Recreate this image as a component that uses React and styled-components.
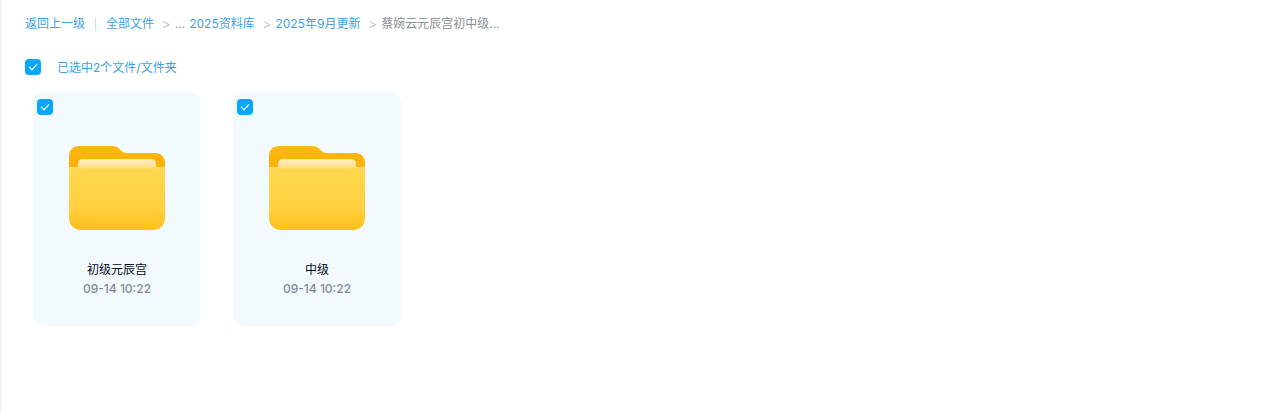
import React from 'react'
import styled, { createGlobalStyle } from 'styled-components'

const GlobalStyle = createGlobalStyle`
  html, body {
    margin: 0;
    padding: 0;
    background: #fff;
  }
  body {
    font-family: Inter, "Noto Sans CJK SC", sans-serif;
  }
`

const Page = styled.div`
  box-sizing: border-box;
  height: 414px;
  padding: 16px 24px 0;
  border-left: 1px solid #f0f0f0;
`

const Crumbs = styled.nav`
  display: flex;
  align-items: center;
  height: 16px;
  font-size: 12px;
  line-height: 16px;
  white-space: nowrap;
`

const CrumbLink = styled.a`
  color: #3d9fe6;
`

const Divider = styled.span`
  width: 1px;
  height: 13px;
  margin: 0 10px;
  background: #cfe0f2;
`

const Sep = styled.span`
  margin: 0 4px 0 7.5px;
  font-size: 14px;
  color: #c3cfdf;
`

const Dots = styled.span`
  margin-right: 4px;
  color: #8a919f;
`

const Current = styled.span`
  color: #8a8f99;
`

const SelectBar = styled.div`
  display: flex;
  align-items: center;
  gap: 16px;
  margin-top: 27px;
  font-size: 12px;
  line-height: 16px;
  color: #3d9fe6;
`

const SelectText = styled.span`
  box-sizing: border-box;
  height: 16px;
  padding-top: 1px;
`

const Check = styled.span`
  display: flex;
  align-items: center;
  justify-content: center;
  width: 16px;
  height: 16px;
  border-radius: 4px;
  background: #06a7ff;
`

const Grid = styled.div`
  display: flex;
  gap: 32px;
  margin: 17px 0 0 8px;
`

const Card = styled.div`
  position: relative;
  display: flex;
  flex-direction: column;
  align-items: center;
  width: 168px;
  height: 234px;
  padding-top: 54px;
  box-sizing: border-box;
  border-radius: 10px;
  background: #f2fafe;
`

const CardCheck = styled.div`
  position: absolute;
  top: 7px;
  left: 4px;
`

const Name = styled.div`
  margin-top: 31px;
  font-size: 12px;
  line-height: 18px;
  color: #03081a;
`

const Time = styled.div`
  margin-top: 1px;
  font-size: 12px;
  font-weight: 500;
  line-height: 18px;
  color: #818999;
`

const Tick = () => (
  <svg width="10" height="10" viewBox="0 0 10 10" fill="none">
    <path d="M1.4 5.2 L4 7.8 L8.6 2.6" stroke="#fff" strokeWidth="1.2" strokeLinecap="round" strokeLinejoin="round" />
  </svg>
)

const FolderIcon = ({ id }) => (
  <svg width="96" height="84" viewBox="0 0 96 84">
    <defs>
      <linearGradient id={`back${id}`} x1="0" y1="0" x2="0" y2="1">
        <stop offset="0" stopColor="#ffb90f" />
        <stop offset="1" stopColor="#ffa800" />
      </linearGradient>
      <linearGradient id={`front${id}`} x1="0" y1="0" x2="0" y2="1">
        <stop offset="0" stopColor="#ffd850" />
        <stop offset="0.65" stopColor="#ffd040" />
        <stop offset="1" stopColor="#ffc01a" />
      </linearGradient>
      <linearGradient id={`paper${id}`} x1="0" y1="0" x2="0" y2="1">
        <stop offset="0" stopColor="#fff0c4" />
        <stop offset="1" stopColor="#ffd97a" />
      </linearGradient>
    </defs>
    <path
      d="M10 0 H44 C47 0 49 1.5 51 3.5 C53 5.5 55 7 58 7 H86 C92 7 96 11 96 17 V40 H0 V10 C0 4 4 0 10 0 Z"
      fill={`url(#back${id})`}
    />
    <path d="M9 18 C9 15 11 13 14 13 H82 C85 13 87 15 87 18 V24 H9 Z" fill={`url(#paper${id})`} />
    <path
      d="M0 21 H96 V72 C96 79 91 84 84 84 H12 C5 84 0 79 0 72 Z"
      fill={`url(#front${id})`}
    />
    <rect x="0" y="21" width="96" height="1.5" fill="#ffe07a" />
  </svg>
)

const files = [
  { id: 'a', name: '初级元辰宫', time: '09-14 10:22' },
  { id: 'b', name: '中级', time: '09-14 10:22' },
]

export default function App() {
  return (
    <Page>
      <GlobalStyle />
      <Crumbs>
        <CrumbLink>返回上一级</CrumbLink>
        <Divider />
        <CrumbLink>全部文件</CrumbLink>
        <Sep>&gt;</Sep>
        <Dots>...</Dots>
        <CrumbLink>2025资料库</CrumbLink>
        <Sep>&gt;</Sep>
        <CrumbLink>2025年9月更新</CrumbLink>
        <Sep>&gt;</Sep>
        <Current>蔡婉云元辰宫初中级...</Current>
      </Crumbs>
      <SelectBar>
        <Check>
          <Tick />
        </Check>
        <SelectText>已选中2个文件/文件夹</SelectText>
      </SelectBar>
      <Grid>
        {files.map((f) => (
          <Card key={f.id}>
            <CardCheck>
              <Check>
                <Tick />
              </Check>
            </CardCheck>
            <FolderIcon id={f.id} />
            <Name>{f.name}</Name>
            <Time>{f.time}</Time>
          </Card>
        ))}
      </Grid>
    </Page>
  )
}
